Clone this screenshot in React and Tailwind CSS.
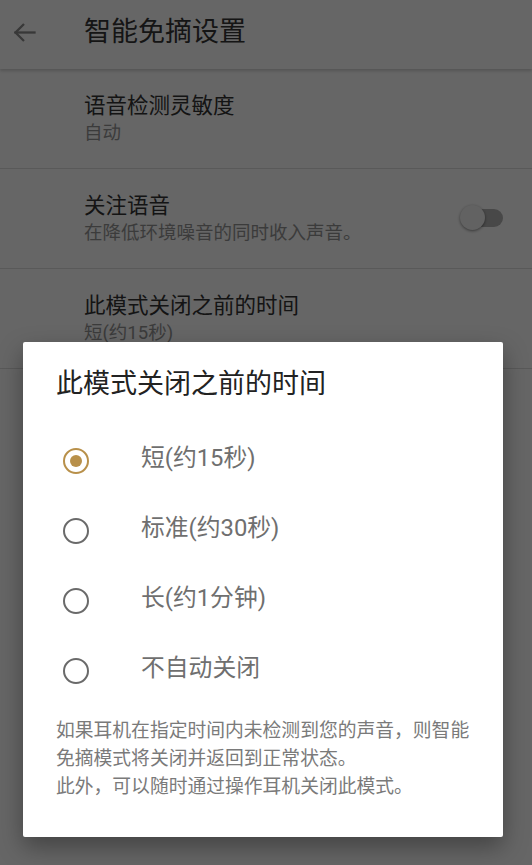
import React from "react";

const font = "font-['Roboto','Noto_Sans_CJK_SC',sans-serif]";

function Item({ title, sub, right }) {
  return (
    <div className="flex items-center border-b border-[#dedede] pl-[84px] pr-[29px] pt-[23px] pb-[22px]">
      <div className="flex-1">
        <div className="text-[21.5px] leading-[28px] text-[#343434]">{title}</div>
        <div className="text-[18.5px] leading-[26px] text-[#959595]">{sub}</div>
      </div>
      {right}
    </div>
  );
}

function Switch() {
  return (
    <div className="relative w-[43px] h-[26px] mb-[2px]">
      <div className="absolute right-0 top-[4px] w-[36px] h-[18px] rounded-full bg-[#b4b4b4]" />
      <div className="absolute left-0 top-0 w-[25px] h-[25px] rounded-full bg-[#f4f4f4] shadow-[0_1px_3px_rgba(0,0,0,0.45)]" />
    </div>
  );
}

function Radio({ checked }) {
  return (
    <div
      className={
        "w-[26px] h-[26px] rounded-full border-[2.5px] flex items-center justify-center " +
        (checked ? "border-[#b8904a]" : "border-[#6a6a6a]")
      }
    >
      {checked && <div className="w-[12px] h-[12px] rounded-full bg-[#b8904a]" />}
    </div>
  );
}

export default function App() {
  const options = ["短(约15秒)", "标准(约30秒)", "长(约1分钟)", "不自动关闭"];
  return (
    <div className={"relative w-[532px] h-[865px] overflow-hidden bg-white " + font}>
      <div className="h-[69px] flex items-center pb-[5px] shadow-[0_2px_3px_rgba(0,0,0,0.18)] relative">
        <div className="w-[84px] pl-[13px] flex items-center">
          <svg width="23" height="21" viewBox="0 0 23 21" fill="none" stroke="#8c8c8c" strokeWidth="2.3" strokeLinecap="square">
            <path d="M21.5 10.5H2.5" />
            <path d="M11 2L2.5 10.5L11 19" strokeLinecap="butt" />
          </svg>
        </div>
        <div className="text-[27px] leading-[34px] text-[#363636]">智能免摘设置</div>
      </div>
      <Item title="语音检测灵敏度" sub="自动" />
      <Item title="关注语音" sub="在降低环境噪音的同时收入声音。" right={<Switch />} />
      <Item title="此模式关闭之前的时间" sub="短(约15秒)" />

      <div className="absolute inset-0 bg-black/60" />

      <div className="absolute left-[23px] top-[342px] w-[480px] bg-white rounded-[2px] shadow-[0_10px_24px_rgba(0,0,0,0.35)] pt-[24px] pb-[36px]">
        <div className="pl-[33px] text-[27px] leading-[36px] text-[#222]">此模式关闭之前的时间</div>
        <div className="mt-[24px]">
          {options.map((o, i) => (
            <div key={o} className="h-[70px] flex items-center pl-[40px]">
              <Radio checked={i === 0} />
              <div className="ml-[52px] mb-[7px] text-[23.8px] leading-[30px] text-[#6f6f6f]">{o}</div>
            </div>
          ))}
        </div>
        <div className="mt-[11px] pl-[33px] text-[18.8px] leading-[28px] text-[#7a7a7a] whitespace-nowrap">
          <div>如果耳机在指定时间内未检测到您的声音，则智能</div>
          <div>免摘模式将关闭并返回到正常状态。</div>
          <div>此外，可以随时通过操作耳机关闭此模式。</div>
        </div>
      </div>
    </div>
  );
}
